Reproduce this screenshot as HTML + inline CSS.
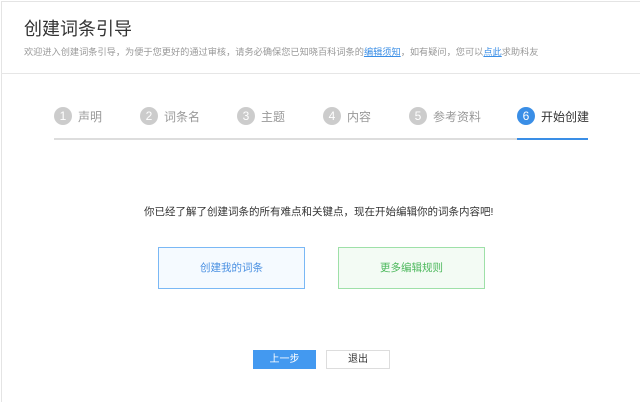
<!DOCTYPE html>
<html style="height:402px;overflow:hidden"><head><meta charset="utf-8"><style>
*{margin:0;padding:0;box-sizing:border-box}
body{width:640px;height:402px;background:#fff;font-family:"Liberation Sans","Noto Sans CJK SC",sans-serif;position:relative;overflow:hidden}
.frame{position:absolute;left:1px;top:1px;width:639px;height:401px;border-left:1px solid #e4e4e4;border-top:1px solid #e4e4e4}
.hd{position:absolute;left:1px;top:73px;width:639px;height:1px;background:#e6e6e6}
.t{position:absolute;left:24px;top:15px;font-size:18px;color:#333}
.s{position:absolute;left:24px;top:44px;font-size:9.2px;color:#999;white-space:nowrap}
.s a{color:#3a8ee6;text-decoration:underline}
.st{position:absolute;top:107px;height:18px;display:flex;align-items:center;font-size:12px;color:#999;white-space:nowrap}
.st i{display:inline-block;width:18px;height:18px;border-radius:50%;background:#ccc;color:#fff;font-style:normal;font-size:12px;text-align:center;line-height:18px;margin-right:6px}
.st.a{color:#333}.st.a i{background:#3a8ee6}
.line{position:absolute;left:54px;top:138px;width:534px;height:2px;background:#ddd}
.act{position:absolute;left:517px;top:138px;width:71px;height:2px;background:#3a8ee6}
.msg{position:absolute;left:144px;top:204px;font-size:10.5px;color:#333;white-space:nowrap}
.b{position:absolute;top:247px;width:147px;height:42px;font-size:10.5px;text-align:center;line-height:40px}
.b1{left:158px;border:1px solid #7ab8f5;background:#f5faff;color:#4a90e2}
.b2{left:338px;border:1px solid #9ee0a8;background:#f3fbf4;color:#4cb85c}
.p{position:absolute;top:350px;height:19px;width:63px;font-size:10px;text-align:center;line-height:19px}
.p1{left:253px;background:#4399f0;color:#fff}
.p2{left:326px;width:64px;border:1px solid #ddd;color:#333;line-height:17px}
</style></head><body>
<div class="frame"></div>
<div class="t">创建词条引导</div>
<div class="s">欢迎进入创建词条引导，为便于您更好的通过审核，请务必确保您已知晓百科词条的<a>编辑须知</a>，如有疑问，您可以<a>点此</a>求助科友</div>
<div class="hd"></div>
<div class="st" style="left:54px"><i>1</i>声明</div>
<div class="st" style="left:140px"><i>2</i>词条名</div>
<div class="st" style="left:237px"><i>3</i>主题</div>
<div class="st" style="left:323px"><i>4</i>内容</div>
<div class="st" style="left:409px"><i>5</i>参考资料</div>
<div class="st a" style="left:517px"><i>6</i>开始创建</div>
<div class="line"></div><div class="act"></div>
<div class="msg">你已经了解了创建词条的所有难点和关键点，现在开始编辑你的词条内容吧!</div>
<div class="b b1">创建我的词条</div>
<div class="b b2">更多编辑规则</div>
<div class="p p1">上一步</div>
<div class="p p2">退出</div>
</body></html>
